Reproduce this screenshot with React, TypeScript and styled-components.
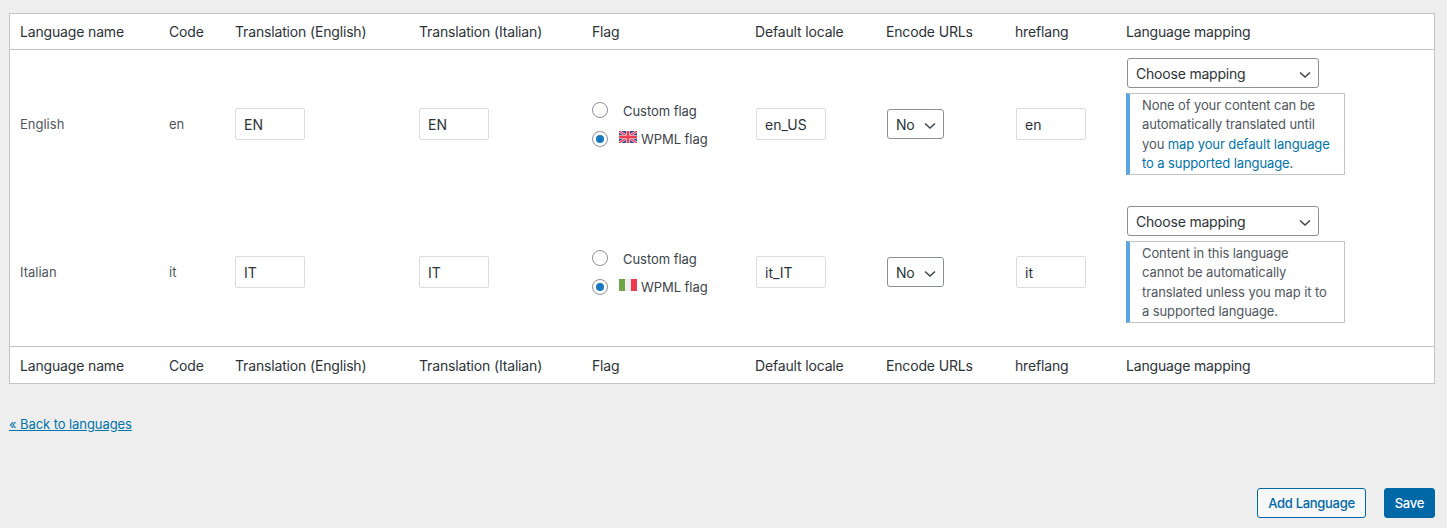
import React from "react";
import styled, { createGlobalStyle } from "styled-components";

const Global = createGlobalStyle`
  html, body { margin: 0; padding: 0; background: #eeeeee; }
  body { font-family: Inter, "Liberation Sans", sans-serif; font-size: 13px; color: #3c434a; }
  * { box-sizing: border-box; }
`;

const Page = styled.div`
  width: 1447px;
  height: 528px;
  padding: 13px 12px 10px 9px;
  display: flex;
  flex-direction: column;
  overflow: hidden;
`;

const Table = styled.table`
  width: 1426px;
  table-layout: fixed;
  border-collapse: separate;
  border-spacing: 0;
  background: #fff;
  border: 1px solid #c3c4c7;
`;

const HeadCell = styled.th<{ $foot?: boolean }>`
  height: ${(p) => (p.$foot ? "37px" : "36px")};
  padding: 0 10px;
  text-align: left;
  font-size: 14px;
  font-weight: 400;
  letter-spacing: -0.16px;
  color: #2c3338;
  border-bottom: ${(p) => (p.$foot ? "none" : "1px solid #c3c4c7")};
  border-top: ${(p) => (p.$foot ? "1px solid #c3c4c7" : "none")};
`;

const Cell = styled.td`
  padding: 8px 10px;
  vertical-align: middle;
  font-size: 13px;
  color: #50575e;
`;

const TextInput = styled.input<{ $inset?: boolean }>`
  display: block;
  width: 70px;
  height: 32px;
  margin-left: ${(p) => (p.$inset ? "1px" : "0")};
  padding: 0 8px;
  border: 1px solid #dcdcde;
  border-radius: 2px;
  background: #fff;
  font-family: inherit;
  font-size: 14px;
  color: #2c3338;
  outline: none;
`;

const SelectWrap = styled.div<{ $w: number }>`
  position: relative;
  width: ${(p) => p.$w}px;
  height: 30px;
  margin-left: 1px;
  svg {
    position: absolute;
    right: 8px;
    top: 11px;
    pointer-events: none;
  }
`;

const Select = styled.select`
  appearance: none;
  display: block;
  width: 100%;
  height: 100%;
  padding: 0 24px 0 8px;
  border: 1px solid #8c8f94;
  border-radius: 3px;
  background: #fff;
  font-family: inherit;
  font-size: 14px;
  letter-spacing: -0.2px;
  color: #2c3338;
`;

const FlagGroup = styled.div`
  display: flex;
  flex-direction: column;
  gap: 12px;
`;

const RadioRow = styled.label`
  display: flex;
  align-items: center;
  height: 17px;
  font-size: 13px;
  letter-spacing: -0.05px;
  color: #3c434a;
`;

const Radio = styled.input.attrs({ type: "radio" })`
  appearance: none;
  flex: none;
  width: 16px;
  height: 16px;
  margin: 0 11px 0 0;
  border: 1px solid #8c8f94;
  border-radius: 50%;
  background: #fff;
  display: grid;
  place-items: center;
  &:checked::before {
    content: "";
    width: 8px;
    height: 8px;
    border-radius: 50%;
    background: #1878c0;
  }
`;

const FlagIcon = styled.svg`
  flex: none;
  width: 18px;
  height: 12px;
  margin: -3px 4px 0 0;
`;

const RadioText = styled.span<{ $plain?: boolean }>`
  margin-left: ${(p) => (p.$plain ? "4px" : "0")};
  margin-top: ${(p) => (p.$plain ? "2px" : "0")};
`;

const Notice = styled.div`
  width: 219px;
  margin: 5px 0 15px;
  padding: 1.59375px 12px 0.40625px;
  background: #fff;
  border: 1px solid #c3c4c7;
  border-left: 4px solid #5ba6e0;
  font-size: 13px;
  line-height: 19.5px;
  letter-spacing: -0.1px;
  color: #50575e;
`;

const Link = styled.a`
  color: #0073aa;
  text-decoration: none;
`;

const BackLink = styled.a`
  align-self: flex-start;
  margin-top: 31px;
  margin-left: 0;
  font-size: 13px;
  line-height: 18px;
  letter-spacing: -0.08px;
  color: #0073aa;
  text-decoration: underline;
`;

const Actions = styled.div`
  display: flex;
  justify-content: flex-end;
  gap: 18px;
  margin-top: auto;
`;

const Button = styled.button<{ $primary?: boolean }>`
  height: 30px;
  padding: 0 10px;
  border: 1px solid #0068a6;
  border-radius: 3px;
  background: ${(p) => (p.$primary ? "#0068a6" : "#f6f7f7")};
  color: ${(p) => (p.$primary ? "#fff" : "#0068a6")};
  font-family: inherit;
  font-size: 13px;
  font-weight: 500;
  letter-spacing: -0.3px;
`;

const Chevron = () => (
  <svg width="12" height="12" viewBox="0 0 12 12" fill="none">
    <path d="M1 3.5 L6 8 L11 3.5" stroke="#3c434a" strokeWidth="1.5" />
  </svg>
);

const UkFlag = () => (
  <FlagIcon viewBox="0 0 18 12">
    <rect width="18" height="12" fill="#3a4f9c" />
    <path d="M0 0 L18 12 M18 0 L0 12" stroke="#f4d4d8" strokeWidth="2.6" />
    <path d="M0 0 L18 12 M18 0 L0 12" stroke="#ee3f55" strokeWidth="1.3" />
    <path d="M9 0 V12 M0 6 H18" stroke="#f4e4e6" strokeWidth="3.6" />
    <path d="M9 0 V12 M0 6 H18" stroke="#ee3f55" strokeWidth="2.4" />
  </FlagIcon>
);

const ItFlag = () => (
  <FlagIcon viewBox="0 0 18 12">
    <rect width="6" height="12" fill="#6da544" />
    <rect x="6" width="6" height="12" fill="#eeeeee" />
    <rect x="12" width="6" height="12" fill="#f0384f" />
  </FlagIcon>
);

const columns = [149, 66, 184, 173, 163, 131, 129, 111, 318];
const headers = [
  "Language name",
  "Code",
  "Translation (English)",
  "Translation (Italian)",
  "Flag",
  "Default locale",
  "Encode URLs",
  "hreflang",
  "Language mapping",
];

type Lang = {
  name: string;
  code: string;
  label: string;
  locale: string;
  flag: React.ReactNode;
  notice: React.ReactNode;
};

const languages: Lang[] = [
  {
    name: "English",
    code: "en",
    label: "EN",
    locale: "en_US",
    flag: <UkFlag />,
    notice: (
      <>
        None of your content can be automatically translated until you{" "}
        <Link href="#">map your default language to a supported language</Link>.
      </>
    ),
  },
  {
    name: "Italian",
    code: "it",
    label: "IT",
    locale: "it_IT",
    flag: <ItFlag />,
    notice: (
      <>
        Content in this language cannot be automatically translated unless you map it to a
        supported language.
      </>
    ),
  },
];

export default function App() {
  return (
    <>
      <Global />
      <Page>
        <Table>
          <colgroup>
            {columns.map((w, i) => (
              <col key={i} style={{ width: w }} />
            ))}
          </colgroup>
          <thead>
            <tr>
              {headers.map((h) => (
                <HeadCell key={h}>{h}</HeadCell>
              ))}
            </tr>
          </thead>
          <tbody>
            {languages.map((l) => (
              <tr key={l.code}>
                <Cell>{l.name}</Cell>
                <Cell>{l.code}</Cell>
                <Cell>
                  <TextInput defaultValue={l.label} />
                </Cell>
                <Cell>
                  <TextInput defaultValue={l.label} />
                </Cell>
                <Cell>
                  <FlagGroup>
                    <RadioRow>
                      <Radio name={`flag-${l.code}`} />
                      <RadioText $plain>Custom flag</RadioText>
                    </RadioRow>
                    <RadioRow>
                      <Radio name={`flag-${l.code}`} defaultChecked />
                      {l.flag}
                      <RadioText>WPML flag</RadioText>
                    </RadioRow>
                  </FlagGroup>
                </Cell>
                <Cell>
                  <TextInput $inset defaultValue={l.locale} />
                </Cell>
                <Cell>
                  <SelectWrap $w={57}>
                    <Select defaultValue="No">
                      <option>No</option>
                      <option>Yes</option>
                    </Select>
                    <Chevron />
                  </SelectWrap>
                </Cell>
                <Cell>
                  <TextInput $inset defaultValue={l.code} />
                </Cell>
                <Cell>
                  <SelectWrap $w={192}>
                    <Select defaultValue="Choose mapping">
                      <option>Choose mapping</option>
                    </Select>
                    <Chevron />
                  </SelectWrap>
                  <Notice>{l.notice}</Notice>
                </Cell>
              </tr>
            ))}
          </tbody>
          <tfoot>
            <tr>
              {headers.map((h) => (
                <HeadCell key={h} $foot>
                  {h}
                </HeadCell>
              ))}
            </tr>
          </tfoot>
        </Table>
        <BackLink href="#">« Back to languages</BackLink>
        <Actions>
          <Button>Add Language</Button>
          <Button $primary>Save</Button>
        </Actions>
      </Page>
    </>
  );
}
